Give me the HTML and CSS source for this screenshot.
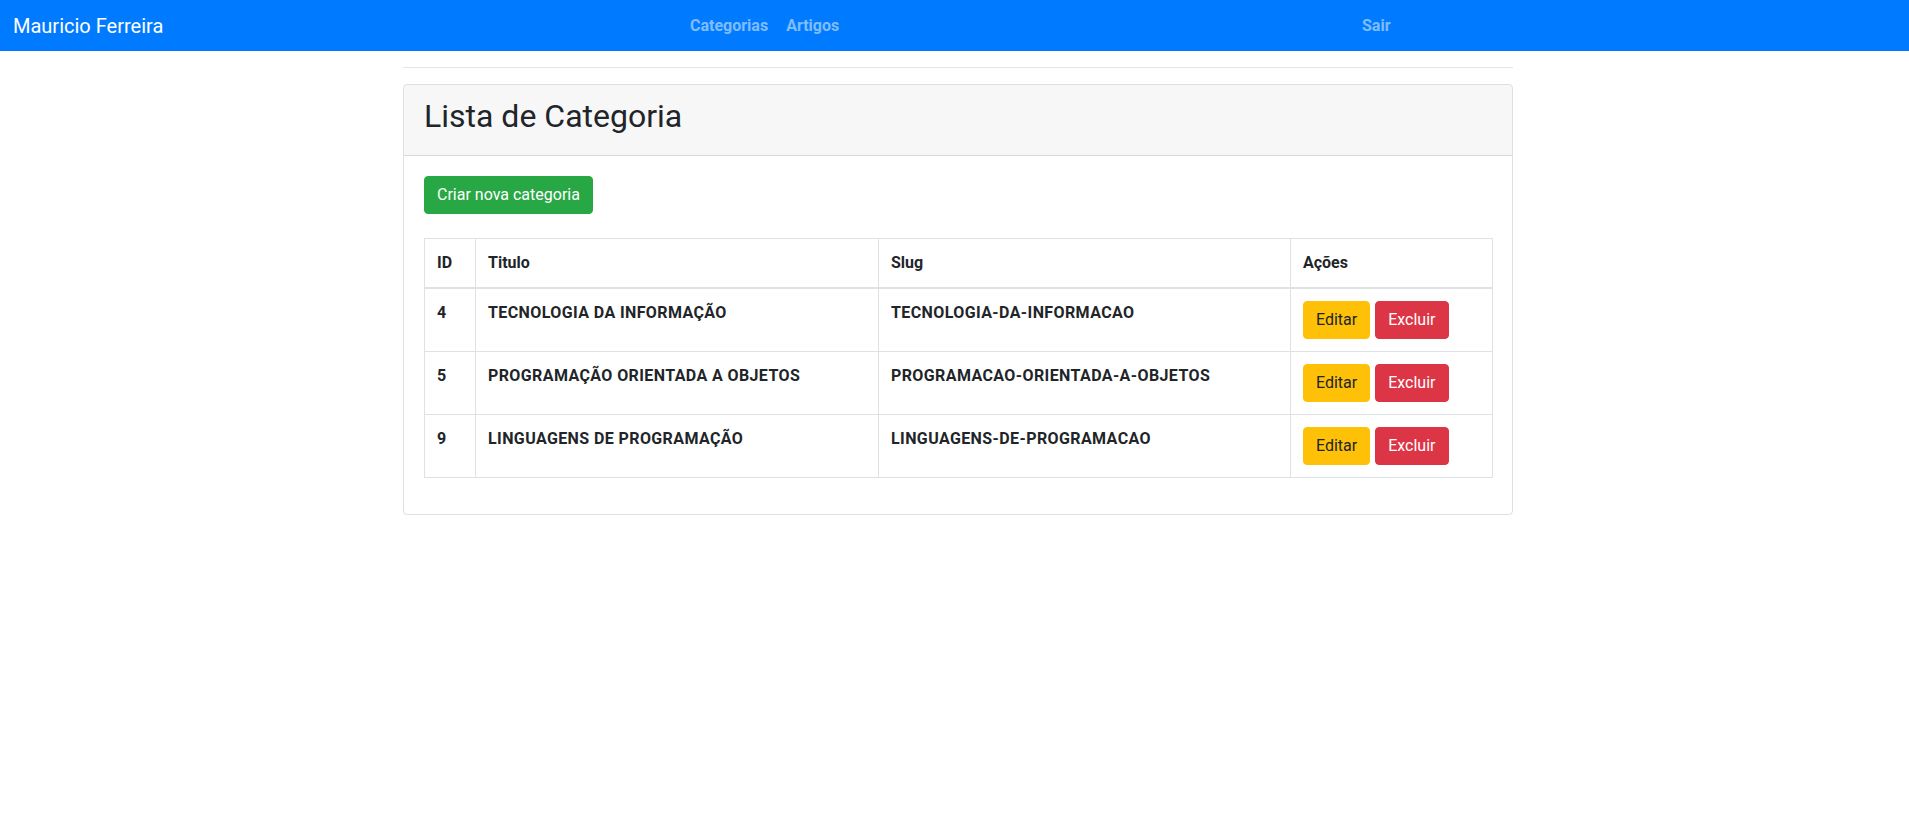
FILE: index.html
```html
<!DOCTYPE html>
<html lang="pt-BR">
<head>
<meta charset="utf-8">
<title>Categorias</title>
<link rel="stylesheet" href="styles.css">
</head>
<body>
<nav class="navbar">
  <a class="brand" href="#">Mauricio Ferreira</a>
  <ul class="nav-links">
    <li><a class="nav-link" href="#">Categorias</a></li>
    <li><a class="nav-link" href="#">Artigos</a></li>
  </ul>
  <ul class="nav-links">
    <li><a class="nav-link" href="#">Sair</a></li>
  </ul>
</nav>

<main class="container">
  <hr class="divider">
  <section class="card">
    <div class="card-header">
      <h2 class="card-title">Lista de Categoria</h2>
    </div>
    <div class="card-body">
      <div class="toolbar">
        <a class="btn btn-success" href="#">Criar nova categoria</a>
      </div>
      <table class="table">
        <colgroup>
          <col class="col-id">
          <col class="col-title">
          <col class="col-slug">
          <col class="col-actions">
        </colgroup>
        <thead>
          <tr>
            <th>ID</th>
            <th>Titulo</th>
            <th>Slug</th>
            <th>Ações</th>
          </tr>
        </thead>
        <tbody>
          <tr>
            <td>4</td>
            <td>TECNOLOGIA DA INFORMAÇÃO</td>
            <td>TECNOLOGIA-DA-INFORMACAO</td>
            <td><div class="actions"><a class="btn btn-warning" href="#">Editar</a><button class="btn btn-danger" type="button">Excluir</button></div></td>
          </tr>
          <tr>
            <td>5</td>
            <td>PROGRAMAÇÃO ORIENTADA A OBJETOS</td>
            <td>PROGRAMACAO-ORIENTADA-A-OBJETOS</td>
            <td><div class="actions"><a class="btn btn-warning" href="#">Editar</a><button class="btn btn-danger" type="button">Excluir</button></div></td>
          </tr>
          <tr>
            <td>9</td>
            <td>LINGUAGENS DE PROGRAMAÇÃO</td>
            <td>LINGUAGENS-DE-PROGRAMACAO</td>
            <td><div class="actions"><a class="btn btn-warning" href="#">Editar</a><button class="btn btn-danger" type="button">Excluir</button></div></td>
          </tr>
        </tbody>
      </table>
    </div>
  </section>
</main>
</body>
</html>
```
FILE: styles.css
```css
* { box-sizing: border-box; }

body {
  margin: 0;
  font-family: Roboto, "Liberation Sans", Arial, sans-serif;
  font-size: 16px;
  line-height: 1.5;
  color: #212529;
  background: #fff;
}

a { text-decoration: none; }

/* Navbar */
.navbar {
  height: 51px;
  background: #007bff;
  padding-left: 13px;
  display: grid;
  grid-template-columns: 669px 672px 1fr;
  align-items: center;
}

.brand {
  color: #fff;
  font-size: 20px;
  line-height: 30px;
  white-space: nowrap;
}

.nav-links {
  list-style: none;
  margin: 0;
  padding: 0;
  display: flex;
  gap: 2px;
}

.nav-link {
  display: block;
  padding: 0 8px;
  font-weight: 700;
  line-height: 24px;
  color: rgba(255, 255, 255, 0.5);
}

/* Container */
.container {
  max-width: 1117px;
  margin: 0 auto;
  padding-left: 7px;
}

.divider {
  margin: 16px 0 0;
  border: 0;
  border-top: 1px solid rgba(0, 0, 0, 0.1);
}

/* Card */
.card {
  margin-top: 16px;
  border: 1px solid rgba(0, 0, 0, 0.125);
  border-radius: 4px;
  overflow: hidden;
}

.card-header {
  background: rgba(0, 0, 0, 0.03);
  padding: 12px 20px;
  border-bottom: 1px solid rgba(0, 0, 0, 0.125);
}

.card-title {
  margin: 0 0 8px;
  font-size: 32px;
  font-weight: 400;
  line-height: 1.2;
}

.card-body {
  padding: 20px;
}

.toolbar {
  margin-bottom: 24px;
}

/* Buttons */
.btn {
  display: inline-block;
  padding: 6px 12px;
  font-family: inherit;
  font-size: 16px;
  font-weight: 400;
  letter-spacing: 0;
  line-height: 24px;
  border: 1px solid transparent;
  border-radius: 4px;
  cursor: pointer;
  white-space: nowrap;
}

.btn-success { background: #28a745; border-color: #28a745; color: #fff; }
.btn-warning { background: #ffc107; border-color: #ffc107; color: #212529; }
.btn-danger  { background: #dc3545; border-color: #dc3545; color: #fff; }

/* Table */
.table {
  width: 100%;
  table-layout: fixed;
  border-collapse: collapse;
  border: 1px solid #dee2e6;
  margin-bottom: 16px;
}

.col-id { width: 51px; }
.col-title { width: 403px; }
.col-slug { width: 412px; }
.col-actions { width: 202px; }

.table th,
.table td {
  padding: 12px;
  border: 1px solid #dee2e6;
  text-align: left;
  vertical-align: top;
  font-weight: 700;
}

.table td {
  letter-spacing: 0.4px;
}

.table thead th {
  border-bottom: 2px solid #dee2e6;
}

.actions {
  display: flex;
  gap: 5px;
}
```
